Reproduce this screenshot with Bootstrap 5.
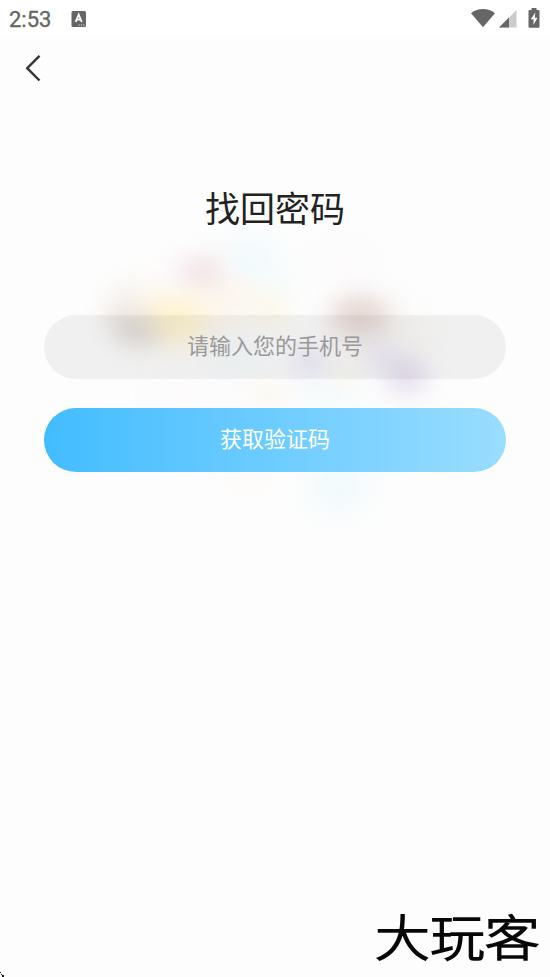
<!DOCTYPE html>
<html lang="zh-CN">
<head>
<meta charset="utf-8">
<meta name="viewport" content="width=device-width, initial-scale=1">
<title>找回密码</title>
<link href="https://cdn.jsdelivr.net/npm/bootstrap@5.3.0/dist/css/bootstrap.min.css" rel="stylesheet">
<style>
body{background:#fdfdfd;font-family:"Noto Sans CJK SC",sans-serif;color:#222}
.screen{height:977px;overflow:hidden;isolation:isolate}
.status{height:37px;background:#fff;padding:0 10px 0 9px;color:#666}
.clock{font:400 22px/37px Roboto,sans-serif;width:62px;-webkit-text-stroke:.35px #666;padding-top:1px}
.toolbar{height:63px;padding:0 0 1px 17px}
.toolbar .btn{width:32px;height:40px}
.page-title{font-size:35px;line-height:52px;margin-top:81px}
.recover{padding:0 44px;margin-top:82px}
.recover .form-control,.recover .btn{height:64px;font-size:22px;line-height:32px;border:0}
.recover .form-control{background:rgba(0,0,0,.05);color:#444;padding:0 12px 7px}
.recover .form-control::placeholder{color:#999;opacity:1}
.recover .btn{margin-top:29px;padding:0 0 7px;color:#fff;background:linear-gradient(90deg,#42bcff,#9addff)}
.backdrop{position:absolute;left:0;top:0;z-index:-1}
.brand{margin:auto 9px 12px auto;width:166px;height:60px;font-weight:300;font-size:49px;line-height:60px;color:#080808;-webkit-text-stroke:1.5px #080808}
.brand span{display:block;white-space:nowrap;transform:scaleX(1.12);transform-origin:0 50%}
.corner{position:absolute;left:0;bottom:0}
</style>
<script src="https://cdn.jsdelivr.net/npm/bootstrap@5.3.0/dist/js/bootstrap.bundle.min.js"></script>
</head>
<body>
<div class="screen position-relative d-flex flex-column">
  <svg class="backdrop" width="550" height="977" aria-hidden="true">
    <defs>
      <filter id="soft" x="-100%" y="-100%" width="300%" height="300%" color-interpolation-filters="sRGB"><feGaussianBlur stdDeviation="12"/></filter>
      <filter id="wide" x="-100%" y="-100%" width="300%" height="300%" color-interpolation-filters="sRGB"><feGaussianBlur stdDeviation="16"/></filter>
    </defs>
    <g filter="url(#wide)" opacity=".65">
      <ellipse cx="180" cy="312" rx="70" ry="32" fill="#fdf5e8"/>
      <ellipse cx="250" cy="260" rx="26" ry="24" fill="#e8f8fd"/>
      <ellipse cx="275" cy="285" rx="20" ry="22" fill="#f2fafd"/>
      <ellipse cx="345" cy="258" rx="40" ry="16" fill="#fdf9fa"/>
      <ellipse cx="385" cy="335" rx="50" ry="28" fill="#f8f6f2"/>
      <ellipse cx="235" cy="358" rx="35" ry="20" fill="#f1fafd"/>
      <ellipse cx="190" cy="395" rx="55" ry="12" fill="#fdf8f8"/>
      <ellipse cx="325" cy="400" rx="38" ry="18" fill="#effafd"/>
      <ellipse cx="338" cy="487" rx="31" ry="24" fill="#e9f8fd"/>
      <ellipse cx="248" cy="475" rx="25" ry="8" fill="#fdf6ed"/>
    </g>
    <g filter="url(#soft)" opacity=".75">
      <ellipse cx="128" cy="300" rx="20" ry="14" fill="#f4edeb"/>
      <ellipse cx="181" cy="272" rx="9" ry="10" fill="#f0e6fa"/>
      <ellipse cx="204" cy="271" rx="18" ry="14" fill="#ecd4d5"/>
      <ellipse cx="235" cy="296" rx="24" ry="14" fill="#fdf2e9"/>
      <ellipse cx="273" cy="310" rx="17" ry="19" fill="#fcf7e3"/>
      <ellipse cx="122" cy="321" rx="16" ry="13" fill="#e5dcd8"/>
      <ellipse cx="175" cy="321" rx="32" ry="21" fill="#fff1c2"/>
      <ellipse cx="138" cy="332" rx="22" ry="11" fill="#cbc4c5"/>
      <ellipse cx="360" cy="316" rx="30" ry="20" fill="#dccac5"/>
      <ellipse cx="310" cy="361" rx="17" ry="12" fill="#dedaf4"/>
      <ellipse cx="382" cy="357" rx="21" ry="11" fill="#e5e2f7"/>
      <ellipse cx="407" cy="377" rx="21" ry="16" fill="#d9cee8"/>
      <ellipse cx="345" cy="375" rx="15" ry="10" fill="#f9f3e5"/>
      <ellipse cx="270" cy="397" rx="17" ry="13" fill="#fcf4e6"/>
    </g>
  </svg>

  <header class="status d-flex align-items-center">
    <span class="clock">2:53</span>
    <svg width="16" height="16" viewBox="0 0 16 16"><rect x=".5" width="14.5" height="16" rx="1.5" fill="#666"/><path d="M4.6 11 7.7 3.6 10.8 11M5.8 8.7h3.8" fill="none" stroke="#fff" stroke-width="1.8"/><path d="M7.5 14h1.3m1 0h1.3m1 0h1.3" stroke="#ddd"/></svg>
    <svg class="ms-auto" width="70" height="22" viewBox="470 8 70 22">
      <path d="M471 13.2C478 7.6 488 7.6 495 13.2L483 27.3Z" fill="#666"/>
      <path d="M499 27.5 516.5 10v17.5Z" fill="#ccc"/><path d="M499 27.5 509 17.5v10Z" fill="#666"/>
      <path d="M529.5 10h2V8h5v2h2q1 0 1 1v15.7q0 1-1 1h-9q-1 0-1-1V11q0-1 1-1Z" fill="#666"/>
      <path d="M535.3 12.5 530.8 19.2h2.7v5.5l4-7h-2.7Z" fill="#fff"/>
    </svg>
  </header>

  <nav class="toolbar d-flex align-items-center">
    <button class="btn p-0 border-0 d-flex align-items-center justify-content-center" type="button" aria-label="返回">
      <svg width="18" height="28" viewBox="0 0 18 28"><path d="M15.5 1.8 3.2 14.2 15.5 26.5" fill="none" stroke="#333" stroke-width="2.4"/></svg>
    </button>
  </nav>

  <h1 class="page-title fw-normal text-center mb-0">找回密码</h1>
  <form class="recover">
    <input class="form-control rounded-pill text-center" type="tel" placeholder="请输入您的手机号">
    <button class="btn rounded-pill w-100 d-block" type="button">获取验证码</button>
  </form>

  <div class="brand"><span>大玩客</span></div>
  <svg class="corner" width="5" height="5"><path d="M0 0h1v1H0zM1 2h1v1H1zM2 3h2v2H2z" fill="#111"/></svg>
</div>
</body>
</html>
